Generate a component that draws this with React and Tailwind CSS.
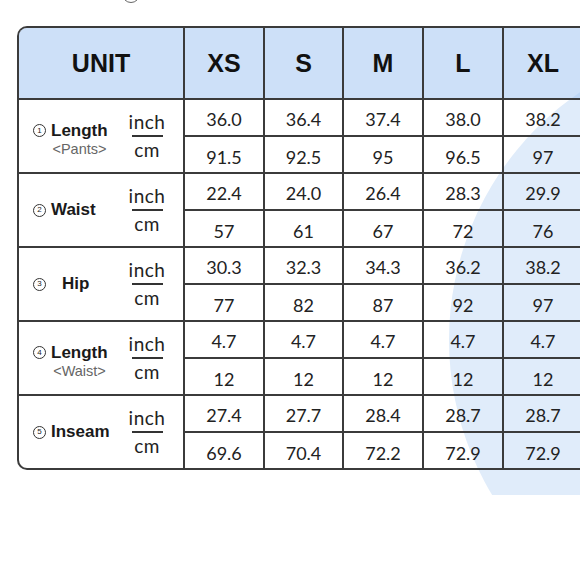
import React from "react";

const rows = [
  {
    n: 1,
    name: "Length",
    sub: "<Pants>",
    inch: ["36.0", "36.4", "37.4", "38.0", "38.2"],
    cm: ["91.5", "92.5", "95", "96.5", "97"],
  },
  {
    n: 2,
    name: "Waist",
    inch: ["22.4", "24.0", "26.4", "28.3", "29.9"],
    cm: ["57", "61", "67", "72", "76"],
  },
  {
    n: 3,
    name: "Hip",
    wide: true,
    inch: ["30.3", "32.3", "34.3", "36.2", "38.2"],
    cm: ["77", "82", "87", "92", "97"],
  },
  {
    n: 4,
    name: "Length",
    sub: "<Waist>",
    inch: ["4.7", "4.7", "4.7", "4.7", "4.7"],
    cm: ["12", "12", "12", "12", "12"],
  },
  {
    n: 5,
    name: "Inseam",
    inch: ["27.4", "27.7", "28.4", "28.7", "28.7"],
    cm: ["69.6", "70.4", "72.2", "72.9", "72.9"],
  },
];

const sizes = ["XS", "S", "M", "L", "XL"];
const colW = ["w-[80px]", "w-[79px]", "w-[80px]", "w-[80px]", "w-[80px]"];

function Circled({ n }) {
  return (
    <span className="w-[13px] h-[13px] shrink-0 rounded-full border border-[#333] flex items-center justify-center text-[8px] leading-none text-[#222] font-['Liberation_Sans',Arial,sans-serif]">
      {n}
    </span>
  );
}

function LabelCell({ row }) {
  return (
    <div className="w-[164px] shrink-0 flex items-center pl-[14px]">
      <div className="w-[95px] flex items-center">
        {/* 이름 + 서브 라벨 */}
        <div className={`flex flex-col items-start ${row.sub ? "mt-[6px]" : ""}`}>
          <div className="flex items-center">
            <Circled n={row.n} />
            <span
              className={`${row.wide ? "ml-[16px]" : "ml-[5px]"} text-[17px] leading-[20px] font-bold text-[#1a1a1a] font-['Liberation_Sans',Arial,sans-serif]`}
            >
              {row.name}
            </span>
          </div>
          {row.sub && (
            <span className="ml-[18px] w-[57px] text-center text-[14.5px] leading-[17px] text-[#666] whitespace-nowrap font-['Liberation_Sans',Arial,sans-serif]">
              {row.sub}
            </span>
          )}
        </div>
      </div>
      <div className="w-[38px] flex flex-col items-center text-[#222] font-['Lato',sans-serif]">
        <span className="text-[19px] leading-[20px] tracking-[0.5px]">inch</span>
        <span className="block w-[31px] h-[2px] bg-[#333] my-[3px]" />
        <span className="text-[19px] leading-[20px] tracking-[0.5px]">cm</span>
      </div>
    </div>
  );
}

export default function App() {
  return (
    <div className="w-[580px] h-[580px] relative overflow-hidden bg-white">
      {/* 배경 원형 장식 */}
      <div className="absolute left-0 top-0 w-full h-[495px] overflow-hidden">
        <div className="absolute left-[449px] top-[40px] w-[600px] h-[600px] rounded-full bg-[#e0ecfa]" />
      </div>
      <span className="absolute left-[122px] top-[-15px] w-[18px] h-[18px] rounded-full border border-[#666]" />

      <div className="relative ml-[17px] pt-[26px]">
        <div className="w-[600px] border-2 border-r-0 border-[#3b3b3b] rounded-l-[10px] overflow-hidden">
          {/* 헤더 */}
          <div className="flex h-[70px] bg-[#9bc1f1]/50 font-['Liberation_Sans',Arial,sans-serif] font-bold text-[25px] text-[#111]">
            <div className="w-[164px] shrink-0 flex items-center justify-center pt-[2px]">UNIT</div>
            {sizes.map((s, i) => (
              <div key={s} className={`${colW[i]} shrink-0 border-l-2 border-[#3b3b3b] flex items-center justify-center pt-[2px]`}>
                {s}
              </div>
            ))}
          </div>

          {rows.map((row, ri) => (
            <div key={ri} className="flex h-[74px] border-t-2 border-[#3b3b3b]">
              <LabelCell row={row} />
              {row.inch.map((v, i) => (
                <div
                  key={i}
                  className={`${colW[i]} shrink-0 border-l-2 border-[#3b3b3b] flex flex-col text-[18px] text-[#222] font-['Lato',sans-serif]`}
                >
                  <div className="h-[35px] flex items-center justify-center pt-[4px]">{v}</div>
                  <div className="h-[37px] border-t-2 border-[#3b3b3b] flex items-center justify-center pt-[5px]">
                    {row.cm[i]}
                  </div>
                </div>
              ))}
            </div>
          ))}
        </div>
      </div>
    </div>
  );
}
